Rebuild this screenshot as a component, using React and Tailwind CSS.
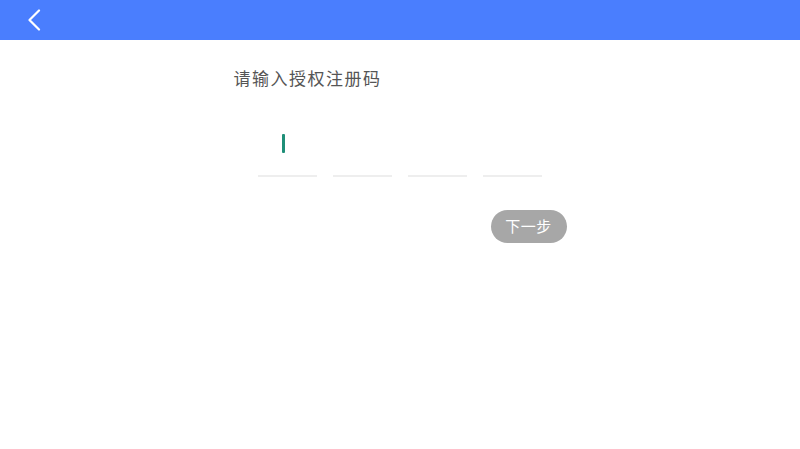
import React from "react";

const slots = [0, 1, 2, 3];

const App = () => {
  return (
    <div className="w-[800px] h-[449px] bg-white flex flex-col" style={{ fontFamily: '"Noto Sans CJK SC", "Noto Sans", sans-serif' }}>
      <header className="h-10 bg-[#4a7efe] flex items-center px-[27px]">
        <svg width="14" height="22" viewBox="0 0 14 22" fill="none">
          <path d="M12 1.5 L2.5 11 L12 20.5" stroke="white" strokeWidth="2.2" strokeLinecap="round" strokeLinejoin="round" />
        </svg>
      </header>

      <main className="w-[333px] mx-auto flex flex-col">
        <p className="mt-[25px] text-[17px] leading-[26px] tracking-[1.5px] text-[#555555]">请输入授权注册码</p>

        <div className="mt-[42px] flex justify-center gap-[16px]">
          {slots.map((i) => (
            <div key={i} className="w-[59px] h-[44px] flex flex-col">
              <div className="h-[20px] pt-[1px] pl-[24px] flex">
                {i === 0 && <div className="w-[3px] h-[19px] bg-[#1f8f78] rounded-[1px]" />}
              </div>
              <div className="mt-auto h-[2px] bg-[#eeeeee]" />
            </div>
          ))}
        </div>

        <div className="mt-[33px] flex justify-end">
          <button className="w-[76px] h-[33px] rounded-full bg-[#a7a7a7] text-white text-[15px] tracking-[0.5px]">
            下一步
          </button>
        </div>
      </main>
    </div>
  );
};

export default App;
